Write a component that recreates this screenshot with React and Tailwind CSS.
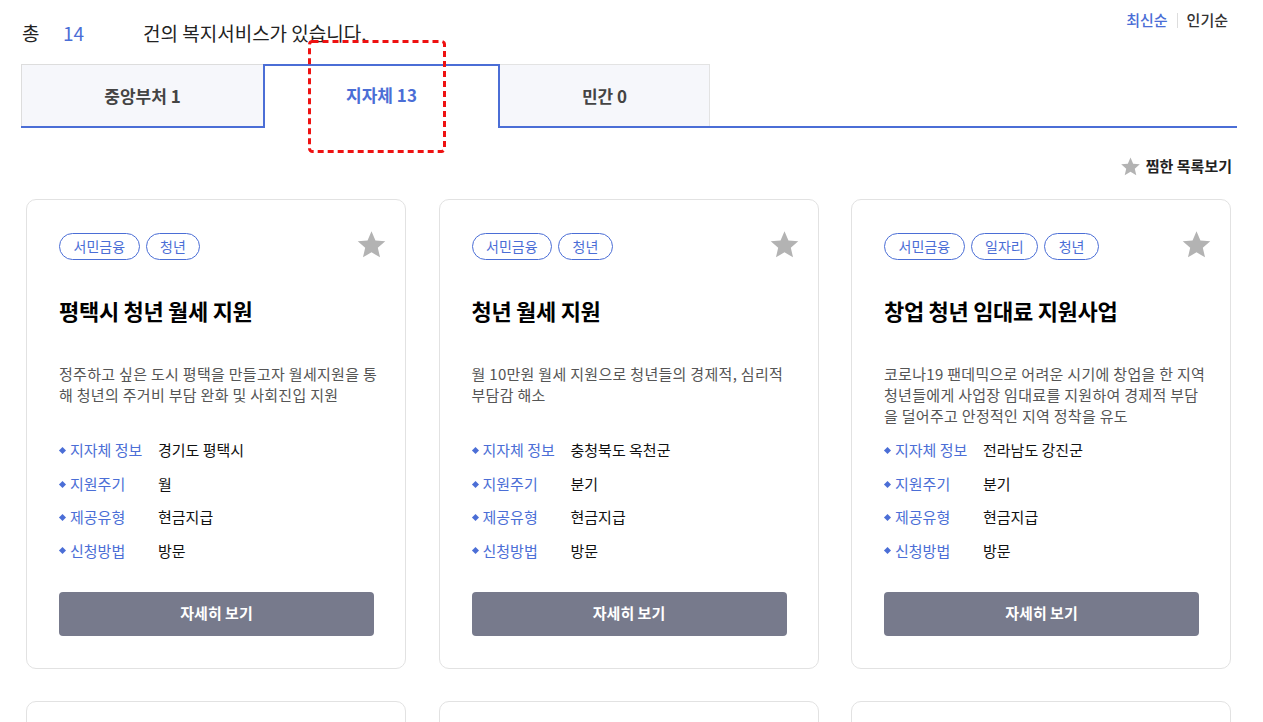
import React from "react";

const BLUE = "text-[#4b6ed6]";

const cards = [
  {
    tags: ["서민금융", "청년"],
    title: "평택시 청년 월세 지원",
    desc: ["정주하고 싶은 도시 평택을 만들고자 월세지원을 통", "해 청년의 주거비 부담 완화 및 사회진입 지원"],
    info: [
      ["지자체 정보", "경기도 평택시"],
      ["지원주기", "월"],
      ["제공유형", "현금지급"],
      ["신청방법", "방문"],
    ],
  },
  {
    tags: ["서민금융", "청년"],
    title: "청년 월세 지원",
    desc: ["월 10만원 월세 지원으로 청년들의 경제적, 심리적", "부담감 해소"],
    info: [
      ["지자체 정보", "충청북도 옥천군"],
      ["지원주기", "분기"],
      ["제공유형", "현금지급"],
      ["신청방법", "방문"],
    ],
  },
  {
    tags: ["서민금융", "일자리", "청년"],
    title: "창업 청년 임대료 지원사업",
    desc: [
      "코로나19 팬데믹으로 어려운 시기에 창업을 한 지역",
      "청년들에게 사업장 임대료를 지원하여 경제적 부담",
      "을 덜어주고 안정적인 지역 정착을 유도",
    ],
    info: [
      ["지자체 정보", "전라남도 강진군"],
      ["지원주기", "분기"],
      ["제공유형", "현금지급"],
      ["신청방법", "방문"],
    ],
  },
];

function Star({ className }) {
  return (
    <svg viewBox="0 0 24 24" className={className} fill="currentColor">
      <path d="M12 1.8l3.05 7.02 7.6.68-5.76 5.02 1.72 7.44L12 18.06l-6.61 3.9 1.72-7.44L1.35 9.5l7.6-.68z" />
    </svg>
  );
}

function Card({ c }) {
  return (
    <div className="relative w-[380px] h-[470px] shrink-0 rounded-[10px] border border-[#e2e2e2] bg-white pt-[33px] pl-[32px] pr-[31px]">
      <Star className="absolute right-[18px] top-[29px] w-[31px] h-[31px] text-[#b3b3b3]" />
      <div className="flex gap-[6px]">
        {c.tags.map((t) => (
          <span
            key={t}
            className={`h-[27px] px-[13.5px] rounded-full border border-[#4b6ed6] ${BLUE} text-[14px] leading-[25px] flex items-center`}
          >
            {t}
          </span>
        ))}
      </div>
      <div className="mt-[35px] text-[22px] leading-[30px] font-bold text-black tracking-[-0.3px]">{c.title}</div>
      <div className="mt-[38px] h-[69px] text-[15px] leading-[21px] text-[#555] tracking-[0.3px] whitespace-nowrap">
        {c.desc.map((l, i) => (
          <div key={i}>{l}</div>
        ))}
      </div>
      <div className="flex flex-col pt-[2px]">
        {c.info.map(([k, v]) => (
          <div key={k} className="h-[33.4px] flex items-center text-[15px]">
            <span className="w-[5px] h-[5px] bg-[#4b6ed6] rotate-45 ml-[1px] mr-[5px]" />
            <span className={`w-[88px] ${BLUE}`}>{k}</span>
            <span className="text-[#111]">{v}</span>
          </div>
        ))}
      </div>
      <button className="mt-[24px] w-full h-[44px] rounded-[4px] bg-[#777a8c] text-white text-[15px] font-bold">
        자세히 보기
      </button>
    </div>
  );
}

export default function App() {
  return (
    <div
      className="relative w-[1263px] h-[722px] overflow-hidden bg-white"
      style={{ fontFamily: '"Noto Sans CJK KR", "Noto Sans", sans-serif' }}
    >
      <div className="ml-[21px] w-[1216px]">
        <div className="relative h-[64px]">
          <div className="absolute left-[1px] top-[19px] flex text-[19px] leading-[28px] text-[#222]">
            <span className="w-[41px]">총</span>
            <span className={`w-[80px] ${BLUE}`}>14</span>
            <span>건의 복지서비스가 있습니다.</span>
          </div>
          <div className="absolute right-[9px] top-[9px] flex items-center text-[15px] leading-[22px] font-medium">
            <span className={BLUE}>최신순</span>
            <span className="w-px h-[15px] bg-[#ddd] mx-[9px]" />
            <span className="text-[#333]">인기순</span>
          </div>
        </div>
        <div className="flex h-[64px] border-b-2 border-[#4b6ed6]">
          <div className="w-[242px] h-[62px] bg-[#f6f7fb] border-t border-l border-[#dddddd] flex items-center justify-center text-[17px] font-bold text-[#444]">
            중앙부처 1
          </div>
          <div className={`relative z-10 w-[237px] h-[64px] -mb-[2px] bg-white border-t-2 border-x-2 border-[#4b6ed6] flex items-center justify-center pb-[4px] text-[17px] font-bold ${BLUE}`}>
            지자체 13
          </div>
          <div className="w-[210px] h-[62px] bg-[#f6f7fb] border-t border-r border-[#e3e3e3] flex items-center justify-center text-[17px] font-bold text-[#444]">
            민간 0
          </div>
        </div>
        <div className="h-[71px] flex items-center justify-end pr-[5px] pt-[6px]">
          <Star className="w-[21px] h-[21px] text-[#b3b3b3] mr-[5px]" />
          <span className="text-[15px] font-bold text-[#222]">찜한 목록보기</span>
        </div>
        <div className="grid grid-cols-[380px_380px_380px] gap-x-[32.5px] gap-y-[32px] pl-[5px]">
          {cards.map((c, i) => (
            <Card key={i} c={c} />
          ))}
          {cards.map((c, i) => (
            <div key={"b" + i} className="w-[380px] h-[470px] rounded-[10px] border border-[#e2e2e2] bg-white" />
          ))}
        </div>
      </div>
      <svg className="absolute z-20 left-[308px] top-[40px] w-[138px] h-[113px] pointer-events-none" viewBox="0 0 138 113">
        <rect x="1.5" y="1.5" width="135" height="110" rx="3" fill="none" stroke="#ee1111" strokeWidth="3" strokeDasharray="6 4" />
      </svg>
    </div>
  );
}
